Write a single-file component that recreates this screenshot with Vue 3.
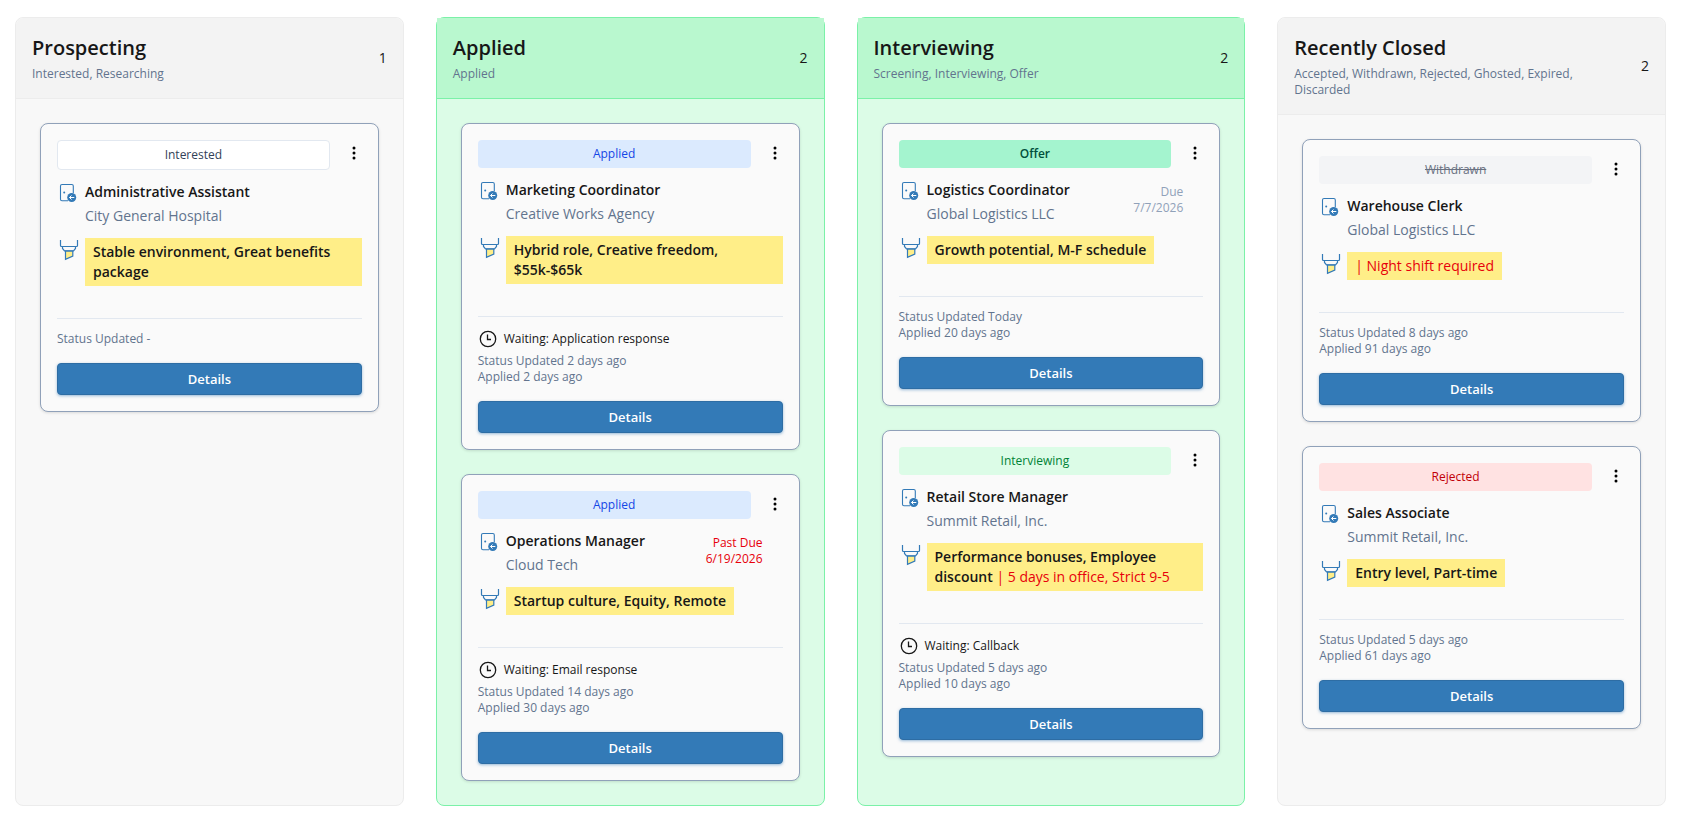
<template>
  <main class="board">
    <section
      v-for="column in columns"
      :key="column.title"
      class="column"
      :class="{ active: column.active }"
    >
      <header class="column-header">
        <div class="column-heading">
          <h2>{{ column.title }}</h2>
          <p>{{ column.statuses }}</p>
        </div>
        <span class="count">{{ column.jobs.length }}</span>
      </header>

      <div class="column-body">
        <article v-for="job in column.jobs" :key="job.title" class="card">
          <div class="card-top">
            <span class="badge" :class="job.status.toLowerCase()">{{ job.status }}</span>
            <button type="button" class="menu" aria-label="More actions">
              <svg viewBox="0 0 16 24" width="16" height="24">
                <circle cx="8" cy="8" r="1.5" />
                <circle cx="8" cy="13" r="1.5" />
                <circle cx="8" cy="18" r="1.5" />
              </svg>
            </button>
          </div>

          <div class="row">
            <svg class="icon" viewBox="0 0 24 24" fill="none" stroke="#337ab7">
              <path d="M11 18.800H5A1.500 1.500 0 0 1 3.500 17.300V4A1.500 1.500 0 0 1 5 2.500H14.800A1.500 1.500 0 0 1 16.300 4V11" stroke-width="1.100" />
              <circle cx="7.200" cy="10.500" r="1" fill="#337ab7" stroke="none" />
              <circle cx="14.700" cy="15.500" r="4.500" fill="#337ab7" stroke="none" />
              <path d="M17.300 15.500H12.500M14.500 13.500L12.500 15.500L14.500 17.500" stroke="#fff" />
            </svg>
            <div class="job">
              <h3>{{ job.title }}</h3>
              <p>{{ job.company }}</p>
            </div>
            <div v-if="job.due" class="due" :class="{ past: job.pastDue }">
              <span>{{ job.pastDue ? 'Past Due' : 'Due' }}</span>
              <span>{{ job.due }}</span>
            </div>
          </div>

          <div class="row">
            <svg class="icon" viewBox="0 0 24 24" fill="none" stroke="#337ab7" stroke-width="1.200">
              <path d="M8.500 13V21.300L15.800 18V13Z" fill="#ffee88" />
              <path d="M3.500 2V7.500A1 1 0 0 0 4.500 8.500H19.500A1 1 0 0 0 20.500 7.500V2" />
              <path d="M5.500 8.500V10.500L7.500 12.800H16.500L18.500 10.500V8.500" />
            </svg>
            <p class="highlight">
              <strong v-if="job.pros">{{ job.pros }}</strong>{{ ' ' }}<span v-if="job.cons" class="cons">| {{ job.cons }}</span>
            </p>
          </div>

          <footer class="card-footer">
            <p v-if="job.waiting" class="waiting">
              <svg viewBox="0 0 20 20" width="20" height="20" fill="none" stroke="#171717">
                <circle cx="10" cy="10" r="7.700" stroke-width="1.300" />
                <path d="M9.500 5.500V10.500H13" stroke-width="1.300" />
              </svg>
              Waiting: {{ job.waiting }}
            </p>
            <p>Status Updated {{ job.updated }}</p>
            <p v-if="job.applied">Applied {{ job.applied }} days ago</p>
            <button type="button" class="details">Details</button>
          </footer>
        </article>
      </div>
    </section>
  </main>
</template>

<script setup>
const columns = [
  {
    title: 'Prospecting',
    statuses: 'Interested, Researching',
    jobs: [
      {
        status: 'Interested',
        title: 'Administrative Assistant',
        company: 'City General Hospital',
        pros: 'Stable environment, Great benefits package',
        updated: '-'
      }
    ]
  },
  {
    title: 'Applied',
    statuses: 'Applied',
    active: true,
    jobs: [
      {
        status: 'Applied',
        title: 'Marketing Coordinator',
        company: 'Creative Works Agency',
        pros: 'Hybrid role, Creative freedom, $55k-$65k',
        waiting: 'Application response',
        updated: '2 days ago',
        applied: 2
      },
      {
        status: 'Applied',
        title: 'Operations Manager',
        company: 'Cloud Tech',
        due: '6/19/2026',
        pastDue: true,
        pros: 'Startup culture, Equity, Remote',
        waiting: 'Email response',
        updated: '14 days ago',
        applied: 30
      }
    ]
  },
  {
    title: 'Interviewing',
    statuses: 'Screening, Interviewing, Offer',
    active: true,
    jobs: [
      {
        status: 'Offer',
        title: 'Logistics Coordinator',
        company: 'Global Logistics LLC',
        due: '7/7/2026',
        pros: 'Growth potential, M-F schedule',
        updated: 'Today',
        applied: 20
      },
      {
        status: 'Interviewing',
        title: 'Retail Store Manager',
        company: 'Summit Retail, Inc.',
        pros: 'Performance bonuses, Employee discount',
        cons: '5 days in office, Strict 9-5',
        waiting: 'Callback',
        updated: '5 days ago',
        applied: 10
      }
    ]
  },
  {
    title: 'Recently Closed',
    statuses: 'Accepted, Withdrawn, Rejected, Ghosted, Expired, Discarded',
    jobs: [
      {
        status: 'Withdrawn',
        title: 'Warehouse Clerk',
        company: 'Global Logistics LLC',
        cons: 'Night shift required',
        updated: '8 days ago',
        applied: 91
      },
      {
        status: 'Rejected',
        title: 'Sales Associate',
        company: 'Summit Retail, Inc.',
        pros: 'Entry level, Part-time',
        updated: '5 days ago',
        applied: 61
      }
    ]
  }
]
</script>

<style>
body {
  background: #fff;
}
</style>

<style scoped>
.board {
  display: grid;
  grid-template-columns: repeat(4, minmax(0, 1fr));
  gap: 32px;
  padding: 17px 19px 20px 15px;
  font-family: "Open Sans", sans-serif;
  font-size: 14px;
  line-height: 20px;
  color: #171717;
}

h2,
h3,
p {
  margin: 0;
}

.column {
  border: 1px solid #ececec;
  border-radius: 8px;
  background: #f8f8f8;
}

.column-header {
  display: flex;
  align-items: center;
  justify-content: space-between;
  gap: 16px;
  padding: 16px;
  border-bottom: 1px solid #ececec;
  border-radius: 8px 8px 0 0;
  background: #f3f3f3;
}

.column.active {
  border-color: #7bf1a8;
  background: #dcfce7;
}

.active .column-header {
  border-color: #7bf1a8;
  border-radius: 0;
  background: #b9f8cf;
}

.column-heading {
  flex: 1;
  padding-right: 32px;
}

h2 {
  margin-bottom: 4px;
  font-size: 20px;
  font-weight: 600;
  line-height: 28px;
}

.column-heading p {
  font-size: 12px;
  line-height: 16px;
  color: #62748e;
}

.column-body {
  display: flex;
  flex-direction: column;
  gap: 24px;
  padding: 24px;
}

.card {
  display: flex;
  flex-direction: column;
  gap: 12px;
  padding: 16px;
  border: 1px solid #90a1b9;
  border-radius: 8px;
  background: #fafafa;
  box-shadow: 0 1px 3px rgba(0, 0, 0, 0.12);
}

.card-top {
  display: flex;
  align-items: flex-start;
  gap: 16px;
}

.badge {
  flex: 1;
  padding: 6px;
  border-radius: 4px;
  font-size: 12px;
  font-weight: 500;
  line-height: 16px;
  text-align: center;
}

.badge.interested {
  border: 1px solid #e2e8f0;
  background: #fff;
  color: #314158;
}

.badge.applied {
  background: #dbeafe;
  color: #1447e6;
}

.badge.offer {
  background: #a4f4cf;
  font-weight: 600;
  color: #004f3b;
}

.badge.interviewing {
  background: #dcfce7;
  color: #008236;
}

.badge.withdrawn {
  background: #f3f4f6;
  color: #6a7282;
  text-decoration: line-through;
}

.badge.rejected {
  background: #ffe2e2;
  color: #c10007;
}

.menu {
  display: flex;
  padding: 0;
  border: 0;
  background: none;
  cursor: pointer;
}

.row {
  display: flex;
  align-items: flex-start;
  gap: 4px;
}

.icon {
  flex: none;
  width: 24px;
  height: 24px;
}

.job {
  flex: 1;
}

h3 {
  margin-bottom: 4px;
  font-size: 14px;
  font-weight: 600;
  line-height: 20px;
}

.job p {
  color: #62748e;
}

.due {
  display: flex;
  flex-direction: column;
  padding: 4px 20px 0 0;
  font-size: 12px;
  line-height: 16px;
  text-align: right;
  color: #90a1b9;
}

.due.past {
  font-weight: 500;
  color: #e7000b;
}

.highlight {
  padding: 4px 8px;
  background: #ffee88;
}

.highlight strong {
  font-weight: 600;
}

.cons {
  color: #e7000b;
}

.card-footer {
  margin-top: 20px;
  padding-top: 12px;
  border-top: 1px solid #e2e8f0;
  font-size: 12px;
  line-height: 16px;
  color: #62748e;
}

.waiting {
  display: flex;
  align-items: center;
  gap: 6px;
  margin-bottom: 4px;
  line-height: 20px;
  color: #171717;
}

.details {
  display: block;
  width: 100%;
  height: 32px;
  margin-top: 16px;
  border: 1px solid #2e6da4;
  border-radius: 4px;
  background: #337ab7;
  box-shadow: 0 1px 3px rgba(51, 122, 183, 0.5);
  font-family: inherit;
  font-size: 13px;
  font-weight: 600;
  color: #fff;
  cursor: pointer;
}
</style>
